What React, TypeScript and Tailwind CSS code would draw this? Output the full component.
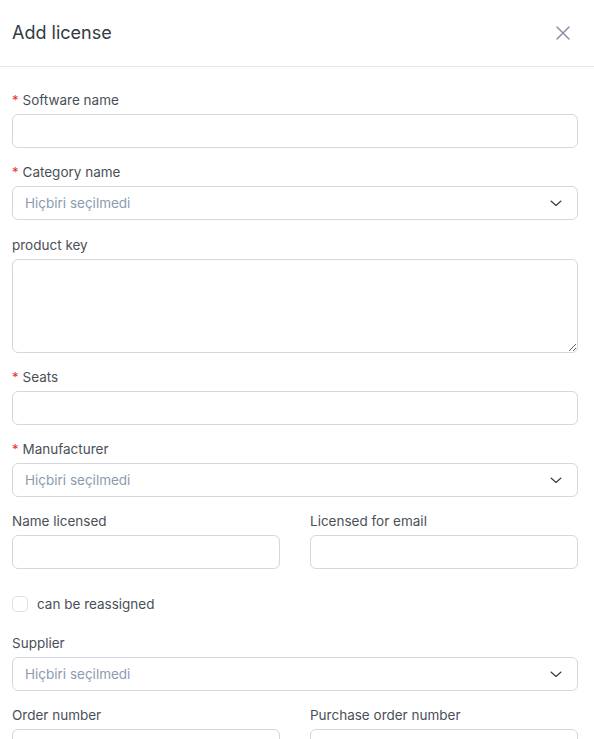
import React from "react";

const font = { fontFamily: "Inter, 'Noto Sans', sans-serif" };

function Label({ text, required }: { text: string; required?: boolean }) {
  return (
    <div className="h-5 text-[13.5px] leading-5 text-[#495057] mb-1 flex items-center">
      {required && <span className="text-[#e03131] mr-[4px] text-[13px]">*</span>}
      <span>{text}</span>
    </div>
  );
}

function Input() {
  return (
    <input
      type="text"
      className="block w-full h-[34px] rounded-[6px] border border-[#d3d7df] bg-white px-3 text-[14px] outline-none"
    />
  );
}

function Select() {
  return (
    <div className="flex items-center justify-between w-full h-[34px] rounded-[6px] border border-[#d3d7df] bg-white pl-3 pr-[15px]">
      <span className="text-[13.5px] text-[#8c9bb0]">Hiçbiri seçilmedi</span>
      <svg width="12" height="12" viewBox="0 0 12 12" fill="none">
        <path d="M1 4l5 4.5L11 4" stroke="#343a40" strokeWidth="1.1" strokeLinecap="round" strokeLinejoin="round" />
      </svg>
    </div>
  );
}

export default function App() {
  return (
    <div className="w-[594px] h-[739px] bg-white overflow-hidden" style={font}>
      <div className="h-[67px] flex items-center justify-between pl-3 pr-[23px] border-b border-[#e3e6ea]">
        <h1 className="text-[18px] font-normal text-[#343a40] leading-7">Add license</h1>
        <svg width="16" height="16" viewBox="0 0 16 16" fill="none">
          <path d="M2 2l12 12M14 2L2 14" stroke="#8a94a6" strokeWidth="1.6" strokeLinecap="round" />
        </svg>
      </div>
      <div className="pl-3 pr-4 pt-[23px] flex flex-col">
        <Label text="Software name" required />
        <Input />
        <div className="h-[14px]" />
        <Label text="Category name" required />
        <Select />
        <div className="h-[15px]" />
        <Label text="product key" />
        <textarea className="block w-full h-[94px] rounded-[6px] border border-[#d3d7df] bg-white px-3 py-2 text-[14px] outline-none resize-y" />
        <div className="h-[14px]" />
        <Label text="Seats" required />
        <Input />
        <div className="h-[14px]" />
        <Label text="Manufacturer" required />
        <Select />
        <div className="h-[14px]" />
        <div className="grid grid-cols-2 gap-[30px]">
          <div>
            <Label text="Name licensed" />
            <Input />
          </div>
          <div>
            <Label text="Licensed for email" />
            <Input />
          </div>
        </div>
        <div className="flex items-center h-5 mt-[25px] mb-[19px]">
          <span className="w-4 h-4 rounded-[4px] border border-[#dde0e6] bg-white" />
          <span className="ml-[9px] text-[13.5px] text-[#495057]">can be reassigned</span>
        </div>
        <Label text="Supplier" />
        <Select />
        <div className="h-[14px]" />
        <div className="grid grid-cols-2 gap-[30px]">
          <div>
            <Label text="Order number" />
            <Input />
          </div>
          <div>
            <Label text="Purchase order number" />
            <Input />
          </div>
        </div>
      </div>
    </div>
  );
}
